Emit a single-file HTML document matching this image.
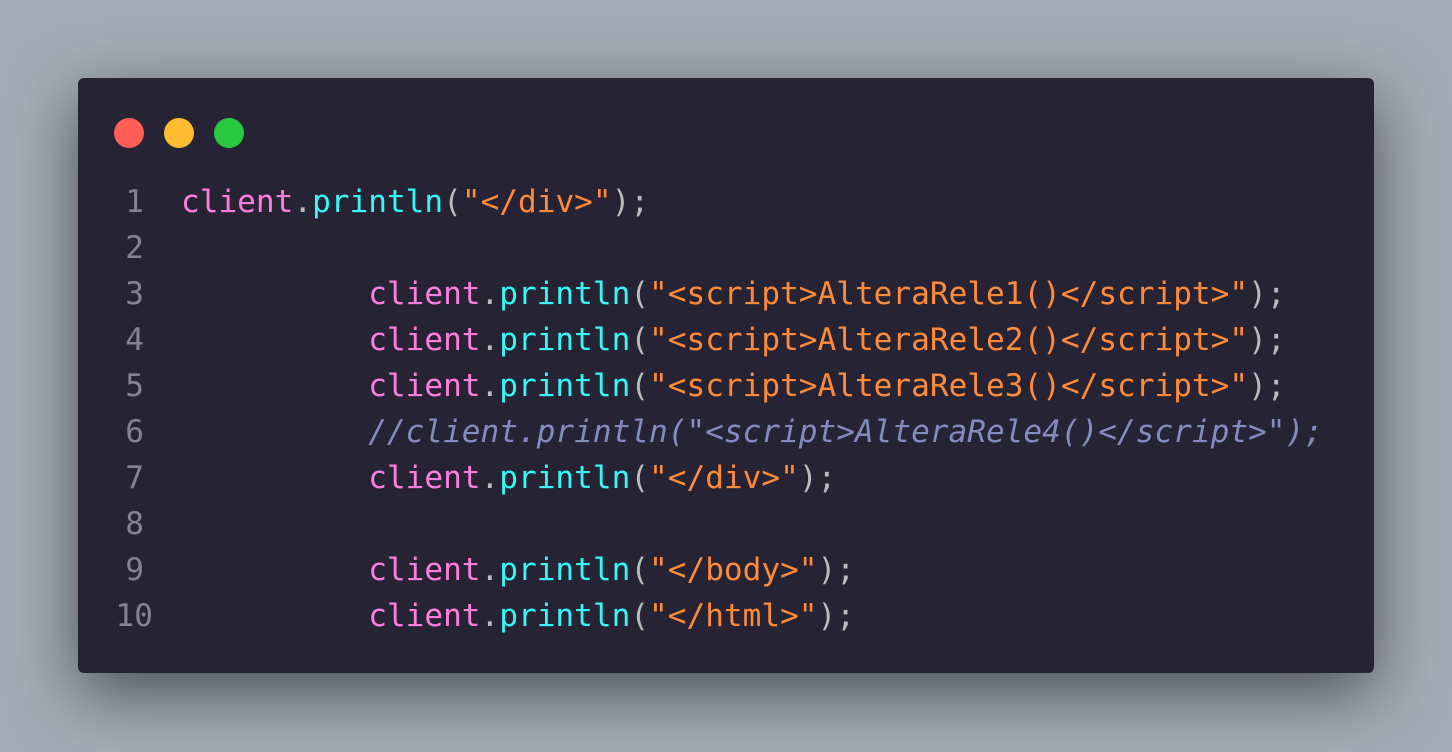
<!DOCTYPE html>
<html><head><style>
html,body{margin:0;padding:0}
body{width:1452px;height:752px;background:#a3adb7;position:relative;overflow:hidden;font-family:"DejaVu Sans Mono","Liberation Mono",monospace}
.win{position:absolute;left:78px;top:78px;width:1296px;height:595px;background:#262335;border-radius:6px;box-shadow:0 20px 68px rgba(0,0,0,0.55)}
.dot{position:absolute;top:118px;width:30px;height:30px;border-radius:50%}
.code{position:absolute;left:0;top:179px;font-size:31.1px;line-height:46px;white-space:pre;color:#bbbbbb}
.ln{position:absolute;width:144px;text-align:right;color:#85838f;left:0}
.tx{position:absolute;left:181px}
.p{color:#ff7edb}.c{color:#36f9f6}.o{color:#ff8b39}.m{color:#848bbd;font-style:italic}
</style></head><body>
<div class="win"></div>
<div class="dot" style="left:114px;background:#ff5f57"></div>
<div class="dot" style="left:164px;background:#febc2e"></div>
<div class="dot" style="left:214px;background:#28c840"></div>
<div class="code">
<div class="ln" style="top:0">1</div><div class="tx" style="top:0"><span class="p">client</span>.<span class="c">println</span>(<span class="o">"&lt;/div&gt;"</span>);</div>
<div class="ln" style="top:46px">2</div>
<div class="ln" style="top:92px">3</div><div class="tx" style="top:92px">          <span class="p">client</span>.<span class="c">println</span>(<span class="o">"&lt;script&gt;AlteraRele1()&lt;/script&gt;"</span>);</div>
<div class="ln" style="top:138px">4</div><div class="tx" style="top:138px">          <span class="p">client</span>.<span class="c">println</span>(<span class="o">"&lt;script&gt;AlteraRele2()&lt;/script&gt;"</span>);</div>
<div class="ln" style="top:184px">5</div><div class="tx" style="top:184px">          <span class="p">client</span>.<span class="c">println</span>(<span class="o">"&lt;script&gt;AlteraRele3()&lt;/script&gt;"</span>);</div>
<div class="ln" style="top:230px">6</div><div class="tx" style="top:230px">          <span class="m">//client.println("&lt;script&gt;AlteraRele4()&lt;/script&gt;");</span></div>
<div class="ln" style="top:276px">7</div><div class="tx" style="top:276px">          <span class="p">client</span>.<span class="c">println</span>(<span class="o">"&lt;/div&gt;"</span>);</div>
<div class="ln" style="top:322px">8</div>
<div class="ln" style="top:368px">9</div><div class="tx" style="top:368px">          <span class="p">client</span>.<span class="c">println</span>(<span class="o">"&lt;/body&gt;"</span>);</div>
<div class="ln" style="top:414px;width:153px">10</div><div class="tx" style="top:414px">          <span class="p">client</span>.<span class="c">println</span>(<span class="o">"&lt;/html&gt;"</span>);</div>
</div>
</body></html>
